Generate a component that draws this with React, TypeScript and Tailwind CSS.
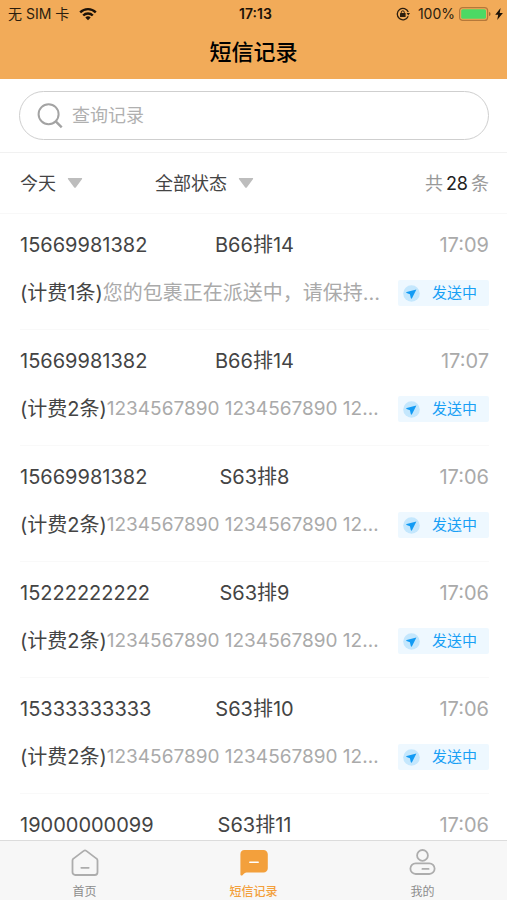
type SmsRecord = {
  phone: string;
  shelf: string;
  time: string;
  billed?: number;
  message?: string;
};

const records: SmsRecord[] = [
  { phone: "15669981382", shelf: "B66排14", time: "17:09", billed: 1, message: "您的包裹正在派送中，请保持…" },
  { phone: "15669981382", shelf: "B66排14", time: "17:07", billed: 2, message: "1234567890 1234567890 12…" },
  { phone: "15669981382", shelf: "S63排8", time: "17:06", billed: 2, message: "1234567890 1234567890 12…" },
  { phone: "15222222222", shelf: "S63排9", time: "17:06", billed: 2, message: "1234567890 1234567890 12…" },
  { phone: "15333333333", shelf: "S63排10", time: "17:06", billed: 2, message: "1234567890 1234567890 12…" },
  { phone: "19000000099", shelf: "S63排11", time: "17:06" },
];

function WifiIcon() {
  return (
    <svg className="h-[14px] w-[18px]" viewBox="0 0 18 14" fill="none" stroke="#1c1208" strokeWidth="2.4">
      <path d="M1.2 5.4a11 11 0 0 1 15.6 0" />
      <path d="M4.2 8.5a6.8 6.8 0 0 1 9.6 0" />
      <path d="M9 13.2 6.3 10.5a3.8 3.8 0 0 1 5.4 0Z" fill="#1c1208" stroke="none" />
    </svg>
  );
}

function RotationLockIcon() {
  return (
    <svg className="h-[14px] w-[14px]" viewBox="0 0 14 14" fill="none" stroke="#2b1d0e">
      <path d="M12.3 5.1A5.7 5.7 0 1 0 12.2 9.3" strokeWidth="1.3" />
      <path d="M10.6 6h3.4l-1.7 2.4Z" fill="#2b1d0e" stroke="none" />
      <rect x="4" y="6.1" width="5.6" height="4" rx=".5" fill="#2b1d0e" stroke="none" />
      <path d="M5.3 6.4V5.3a1.5 1.5 0 0 1 3 0v1.1" strokeWidth="1" />
    </svg>
  );
}

function BatteryIcon() {
  return (
    <svg className="h-[14px] w-[32px]" viewBox="0 0 32 14">
      <rect x=".6" y=".6" width="28" height="12.8" rx="3" fill="none" stroke="#b5783a" strokeWidth="1.2" />
      <rect x="2.2" y="2.2" width="24.8" height="9.6" rx="1.6" fill="#4cd964" />
      <path d="M30 5v4c1.2-.4 1.6-1.2 1.6-2S31.2 5.4 30 5Z" fill="#a06a34" />
    </svg>
  );
}

function BoltIcon() {
  return (
    <svg className="h-3 w-2" viewBox="0 0 8 12" fill="#1c1208">
      <path d="M5.6 0 .2 6.8h3L2.2 12 7.9 4.9H4.7Z" />
    </svg>
  );
}

function StatusBar() {
  return (
    <div className="flex h-[27px] items-center justify-between pr-1 pl-2 text-[14px] text-[#2b1d0e]">
      <div className="flex flex-1 items-center gap-[10px]">
        <span>无 SIM 卡</span>
        <WifiIcon />
      </div>
      <span className="font-semibold text-[#1c1208]">17:13</span>
      <div className="flex flex-1 items-center justify-end">
        <RotationLockIcon />
        <span className="mr-1 ml-2">100%</span>
        <BatteryIcon />
        <span className="ml-1">
          <BoltIcon />
        </span>
      </div>
    </div>
  );
}

function Filter({ label, value }: { label: string; value: string }) {
  return (
    <label className="flex items-center gap-[11px]">
      <select aria-label={label} className="appearance-none bg-transparent text-[18px] text-[#444] outline-none">
        <option>{value}</option>
      </select>
      <svg className="h-[10px] w-4" viewBox="0 0 16 10" fill="#bdbdbd">
        <path d="M1.6 0h12.8c.8 0 1 .7.5 1.2L8.8 9.4c-.4.5-1.2.5-1.6 0L1.1 1.2C.6.7.8 0 1.6 0Z" />
      </svg>
    </label>
  );
}

function SendingBadge() {
  return (
    <span className="flex h-[26px] w-[91px] shrink-0 items-center gap-3 rounded-xs bg-[#eef8ff] pl-[5px] text-[15px] text-[#18a0f5]">
      <svg className="h-[17px] w-[17px]" viewBox="0 0 17 17">
        <circle cx="8.5" cy="8.5" r="8.3" fill="#c4e7fd" />
        <path d="M13.4 4.5 3.7 7c-.7.2-.7.8-.1 1.100l3.300 1.200.9 3.800c.2.700.8.700 1.200.1Z" fill="#129bf4" />
      </svg>
      发送中
    </span>
  );
}

function HomeIcon() {
  return (
    <svg className="h-7 w-7" viewBox="0 0 28 28" fill="none" stroke="#adadad" strokeWidth="1.8" strokeLinejoin="round" strokeLinecap="round">
      <path d="M12.7 1.9a2 2 0 0 1 2.6 0l10.2 7.7c.7.5 1 1.2 1 2v11.7a2.7 2.7 0 0 1-2.7 2.7H4.2a2.7 2.7 0 0 1-2.7-2.7V11.6c0-.8.3-1.5 1-2Z" />
      <path d="M10.3 18.8h7.4" />
    </svg>
  );
}

function MessageIcon() {
  return (
    <svg className="h-7 w-7" viewBox="0 0 28 28">
      <path d="M4.5 1h19A4.3 4.3 0 0 1 27.8 5.3v14A4.3 4.3 0 0 1 23.5 23.6H6.5c-1.5 0-2.5 1-3.8 2.4-.9 1-2.3.6-2.3-.8V5.3A4.3 4.3 0 0 1 4.5 1Z" fill="#f3a03c" />
      <path d="M9.8 13.3h8.4" stroke="#fff" strokeWidth="1.5" strokeLinecap="round" />
    </svg>
  );
}

function UserIcon() {
  return (
    <svg className="h-7 w-7" viewBox="0 0 28 28" fill="none" stroke="#adadad" strokeWidth="1.8" strokeLinecap="round">
      <circle cx="13.5" cy="6.4" r="5.4" />
      <rect x="1.4" y="14.3" width="24.2" height="10.7" rx="5.3" />
      <path d="M13.4 19.9h6.2" />
    </svg>
  );
}

const tabs = [
  { label: "首页", icon: HomeIcon, active: false },
  { label: "短信记录", icon: MessageIcon, active: true },
  { label: "我的", icon: UserIcon, active: false },
];

export default function App() {
  return (
    <div className="flex h-screen flex-col overflow-hidden bg-white font-['Inter','Noto_Sans_CJK_SC',sans-serif]">
      <header className="shrink-0 bg-[#f2ab59]">
        <StatusBar />
        <h1 className="pt-[11px] pb-[13px] text-center text-[22px] leading-7 font-medium text-black">短信记录</h1>
      </header>

      <main className="min-h-0 flex-1 overflow-hidden">
        <div className="border-b border-[#f1f1f1] pt-3 pr-[18px] pb-3 pl-[19px]">
          <label className="flex h-[49px] items-center gap-[9px] rounded-full border border-[#cfcfcf] pl-[17px]">
            <svg className="h-[26px] w-[26px] shrink-0" viewBox="0 0 26 26" fill="none" stroke="#a3a3a3" strokeWidth="2">
              <circle cx="11.6" cy="11.2" r="10" />
              <path d="m18.7 18.4 6 6" strokeWidth="2.4" />
            </svg>
            <input
              type="search"
              aria-label="查询记录"
              placeholder="查询记录"
              className="min-w-0 flex-1 bg-transparent text-[18px] outline-none placeholder:text-[#b0b0b0]"
            />
          </label>
        </div>

        <div className="flex h-[61px] items-center border-b border-[#f8f8f8] pr-[18px] pl-5">
          <div className="w-[135px]">
            <Filter label="日期" value="今天" />
          </div>
          <Filter label="状态" value="全部状态" />
          <p className="ml-auto flex gap-[3px] text-[18px] text-[#999]">
            共<span className="text-[#222]">28</span>条
          </p>
        </div>

        <ul className="pr-[18px] pl-5">
          {records.map((record, index) => (
            <li key={index} className="border-b border-[#f9f9f9] pt-[17px] pb-[23px]">
              <div className="grid grid-cols-3 text-[20px] leading-7 text-[#444]">
                <span>{record.phone}</span>
                <span className="text-center">{record.shelf}</span>
                <span className="text-right text-[#aaa]">{record.time}</span>
              </div>
              {record.message && (
                <div className="mt-[21px] flex items-center justify-between">
                  <p className="flex min-w-0 items-center text-[20px] leading-[26px] whitespace-nowrap text-[#444]">
                    <span>(计费{record.billed}条)</span>
                    <span className={/^\d/.test(record.message) ? "truncate text-[19px] text-[#aaa]" : "truncate text-[#aaa]"}>
                      {record.message}
                    </span>
                  </p>
                  <SendingBadge />
                </div>
              )}
            </li>
          ))}
        </ul>
      </main>

      <nav className="grid h-[60px] shrink-0 grid-cols-3 border-t border-[#dcdcdc] bg-[#f7f7f7]">
        {tabs.map((tab) => (
          <a
            key={tab.label}
            href="#"
            className={
              tab.active
                ? "flex flex-col items-center gap-[5px] pt-2 text-[12px] leading-5 font-medium text-[#f3a03c]"
                : "flex flex-col items-center gap-[5px] pt-2 text-[12px] leading-5 text-[#8c8c8c]"
            }
          >
            <tab.icon />
            {tab.label}
          </a>
        ))}
      </nav>
    </div>
  );
}
